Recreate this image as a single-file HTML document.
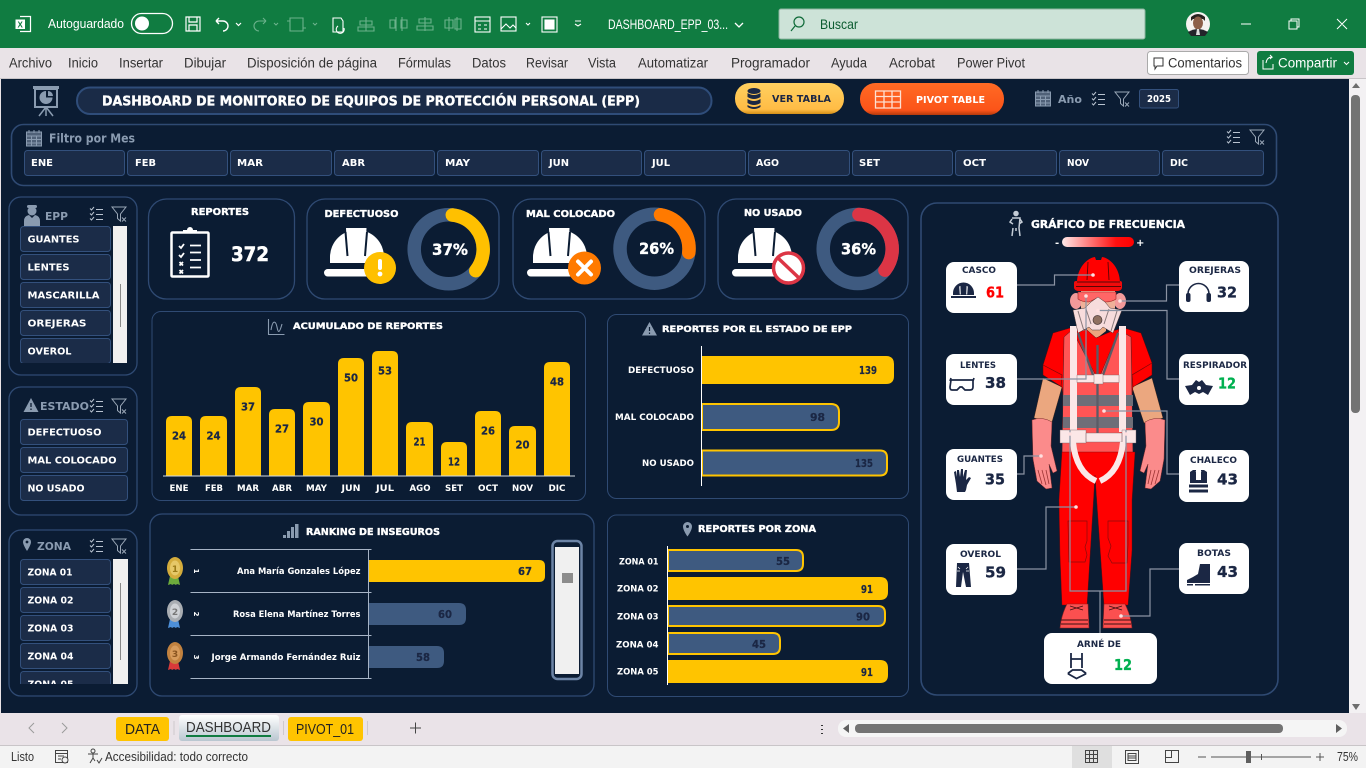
<!DOCTYPE html>
<html lang="es"><head><meta charset="utf-8"><title>Dashboard EPP</title>
<style>
html,body{margin:0;padding:0;width:1366px;height:768px;overflow:hidden;background:#0b1c33}
svg{display:block;position:absolute;left:0;top:0}
.u{font-family:"Liberation Sans",sans-serif;font-size:13.500px;fill:#333}
.m{font-family:"DejaVu Sans",sans-serif;font-weight:bold;fill:#fff;font-size:10px}
.d{fill:#1b2744}
.g{fill:#8a9bb0}
.p{fill:#0b1c33;stroke:#2f4a73;stroke-width:1.300}
.b{fill:#1b2c48;stroke:#33507c;stroke-width:1}
.w{fill:#fff}
.h{stroke:#fff;stroke-width:.35px}
.v{fill:#1b2744;stroke:#1b2744;stroke-width:.25px;font-size:10.800px}
.n{fill:#1b2744;stroke:#1b2744;stroke-width:.35px;font-size:15.500px}
.ln{fill:none;stroke:#8b93a3;stroke-width:1.200}
.dot{fill:#ffe0e0}
</style></head><body>
<svg width="1366" height="768" viewBox="0 0 1366 768" xmlns="http://www.w3.org/2000/svg">
<defs>
<g id="cl" fill="none" stroke="#b9c3d0" stroke-width="1"><path d="M1 1.500l1.500 1.500 2.500-3M1 6.500l1.500 1.500 2.500-3M1 11.500l1.500 1.500 2.500-3M7 2.500h7M7 7.500h7M7 12.500h7"/></g>
<g id="fl" fill="none" stroke="#9aa7b7" stroke-width="1"><path d="M0 0h14l-5.500 7v7l-3-2.500V7z"/><path d="M10 10.500l4 4M14 10.500l-4 4"/></g>
<g id="hat"><path class="w" d="M330 263v-6a27 27 0 0 1 54 0v6z"/><path class="w" d="M346 228h20.500l-1.500 29h-17.500z"/><path d="M345.500 232l2 24M367 232l-2 24" stroke="#0b1c33" stroke-width="2" fill="none"/><rect class="w" x="324" y="269" width="54" height="7.500" rx="3.700"/></g>
<g id="cal" fill="none" stroke="#8a9bb0"><rect x=".5" y="3" width="15" height="14" fill="#8a9bb0" fill-opacity=".55"/><path d="M.5 7h15M.5 10.500h15M.5 14h15M5.500 7v10M10.500 7v10M3 1v3M8 1v3M13 1v3" stroke-width="1"/></g>
<g id="smallhat" fill="#1b2744"><path d="M2 13v-2a10.500 10.500 0 0 1 21 0v2zM0 14h25v2H0z"/><path fill="#fff" d="M8.200 4.500l.6 8h1l-.4-8.600zM16.800 4.500l-.6 8h-1l.4-8.600z"/></g>
<linearGradient id="lg" x1="0" x2="1"><stop offset="0" stop-color="#ffe9e9"/><stop offset=".75" stop-color="#ff1010"/><stop offset="1" stop-color="#f00"/></linearGradient>
<linearGradient id="yb" x1="0" x2="0" y1="0" y2="1"><stop offset="0" stop-color="#ffd060"/><stop offset=".85" stop-color="#ffbc45"/><stop offset="1" stop-color="#d48f18"/></linearGradient>
<linearGradient id="ob" x1="0" x2="0" y1="0" y2="1"><stop offset="0" stop-color="#ff6a24"/><stop offset=".85" stop-color="#fb5419"/><stop offset="1" stop-color="#b53a0c"/></linearGradient>
<linearGradient id="tb" x1="0" x2="0" y1="0" y2="1"><stop offset="0" stop-color="#fff"/><stop offset="1" stop-color="#b9c6d0"/></linearGradient>
<clipPath id="c1"><rect x="10" y="222" width="120" height="141"/></clipPath>
<clipPath id="c2"><rect x="10" y="555" width="120" height="129"/></clipPath>
<g id="glove"><path fill="#fb8b8b" stroke="#7a2b2b" stroke-width=".5" d="M1032 420q10-4 20 2l-1 24 6 25-4 2-4-9 3 24-6 1-9-8-4-22z"/><path d="M1038 470l4 14M1042 470l4 15M1046 470l3 14" stroke="#9c3434" stroke-width=".8" fill="none"/></g>
<g id="boot"><path fill="#fb5050" stroke="#8e1f1f" stroke-width=".6" d="M1067 604h21l1 24h-29l1-7q2-9 6-17z"/><path d="M1070 606l13 4M1083 606l-13 4M1061 620h27M1061 624h27" stroke="#3b1010" stroke-width=".9" fill="none"/></g>
</defs>

<!-- chrome -->
<rect width="1366" height="768" fill="#0b1c33"/>
<rect width="1366" height="48" fill="#107c41"/>
<rect y="48" width="1366" height="31" fill="#e9e3e7"/>
<rect y="78" width="1366" height="1" fill="#c9c5c8"/>
<rect y="79" width="1" height="634" fill="#e9e3e7"/>

<!-- title bar -->
<path d="M20 16.500h10.500v15H20" fill="none" stroke="#fff" stroke-width="1.200"/><rect x="15.500" y="19.500" width="9.500" height="9.500" fill="#fff"/>
<text x="17.500" y="27.500" style="font:bold 8px 'Liberation Sans',sans-serif;fill:#107c41">X</text>
<g fill="none" stroke="#fff" stroke-width="1.200">
<rect x="131.500" y="13.500" width="41" height="20" rx="10" stroke-width="1.300"/>
<path d="M186 17h14v14h-14zM189 17v5h8v-5M189 31v-6h8v6"/>
<path d="M216 21h7a5 5 0 0 1 0 10M216 21l3-3M216 21l3 3" stroke-width="1.400"/>
<path d="M236 23l2.500 2.500 2.500-2.500"/>
</g>
<g fill="none" stroke="#6cb28c" stroke-width="1.100">
<path d="M266 21h-7a5 5 0 0 0 0 10M266 21l-3-3M266 21l-3 3"/><path d="M274 23l2 2 2-2M313 23l2 2 2-2"/>
<path d="M290 18h13v13h-13zM287 21h3M303 28h3"/>
<path d="M366 17v14M360 21h12v4h-12zM358 27h16v4h-16z"/>
<path d="M396 17v14M402 17v14M390 20h5v8h-5zM401 20h6v8h-6z"/>
<path d="M425 17v14M419 19h12v4h-12zM417 26h16v4h-16z"/>
<path d="M449 17v14M457 17v14M445 20h8v8h-8zM455 19h6v10h-6z"/>
</g>
<g fill="none" stroke="#fff" stroke-width="1.100">
<path d="M333 18h8l2 3v11h-10z"/><path d="M338 26a4 4 0 1 0 6 2"/>
<rect x="475" y="17" width="15" height="15"/><path d="M475 21h15M478 25h3M484 25h3M478 29h3M484 29h3"/>
<rect x="501" y="17" width="15" height="14"/><path d="M501 29l5-5 4 4 3-3 3 3"/><path d="M526 23l2 2 2-2" />
<rect x="542" y="17" width="15" height="15"/><rect x="545" y="20" width="9" height="9" fill="#fff"/>
<path d="M575 24l3 2 3-2M575 21h6"/><path d="M735 23l4 4 4-4" stroke-width="1.300"/>
</g>
<circle cx="142" cy="23.500" r="7" fill="#fff"/>
<text class="u" x="48" y="28" style="fill:#fff;font-size:12.500px" textLength="76" lengthAdjust="spacingAndGlyphs">Autoguardado</text>
<text class="u" x="608" y="29" style="fill:#fff;font-size:14px" textLength="120" lengthAdjust="spacingAndGlyphs">DASHBOARD_EPP_03...</text>
<rect x="779" y="9" width="366" height="30" rx="2" fill="#cde3d8" stroke="#8db59f"/>
<circle cx="799" cy="22" r="5" fill="none" stroke="#0e6a38" stroke-width="1.200"/><path d="M795 26l-4 5" stroke="#0e6a38" stroke-width="1.200"/>
<text class="u" x="820" y="29" style="fill:#0c5c31;font-size:14px" textLength="38" lengthAdjust="spacingAndGlyphs">Buscar</text>
<circle cx="1198" cy="24" r="12" fill="#f5f3f0"/>
<path d="M1191 17q7-6 14 0v4l-2-2h-10l-2 2z" fill="#2a221f"/><ellipse cx="1198" cy="23" rx="5" ry="6.500" fill="#8c5f48"/><path d="M1188 32q10-6 20 0l-3 4h-14z" fill="#23242a"/><path d="M1197 29h2l1 6h-4z" fill="#ddd"/>
<path d="M1241 24h10M1289 21h8v8h-8zM1291 21v-2h8v8h-2M1337 19l10 10M1347 19l-10 10" stroke="#fff" stroke-width="1" fill="none"/>

<!-- ribbon tabs -->
<text class="u" x="9" y="67.500" textLength="43" lengthAdjust="spacingAndGlyphs">Archivo</text>
<text class="u" x="68" y="67.500" textLength="30" lengthAdjust="spacingAndGlyphs">Inicio</text>
<text class="u" x="119" y="67.500" textLength="44" lengthAdjust="spacingAndGlyphs">Insertar</text>
<text class="u" x="184" y="67.500" textLength="42" lengthAdjust="spacingAndGlyphs">Dibujar</text>
<text class="u" x="247" y="67.500" textLength="130" lengthAdjust="spacingAndGlyphs">Disposición de página</text>
<text class="u" x="398" y="67.500" textLength="53" lengthAdjust="spacingAndGlyphs">Fórmulas</text>
<text class="u" x="472" y="67.500" textLength="34" lengthAdjust="spacingAndGlyphs">Datos</text>
<text class="u" x="526" y="67.500" textLength="42" lengthAdjust="spacingAndGlyphs">Revisar</text>
<text class="u" x="588" y="67.500" textLength="28" lengthAdjust="spacingAndGlyphs">Vista</text>
<text class="u" x="638" y="67.500" textLength="70" lengthAdjust="spacingAndGlyphs">Automatizar</text>
<text class="u" x="731" y="67.500" textLength="79" lengthAdjust="spacingAndGlyphs">Programador</text>
<text class="u" x="831" y="67.500" textLength="36" lengthAdjust="spacingAndGlyphs">Ayuda</text>
<text class="u" x="889" y="67.500" textLength="46" lengthAdjust="spacingAndGlyphs">Acrobat</text>
<text class="u" x="957" y="67.500" textLength="68" lengthAdjust="spacingAndGlyphs">Power Pivot</text>
<rect x="1147.500" y="51.500" width="101" height="23" rx="3" fill="#fff" stroke="#aaa"/>
<path d="M1154 58h9v8h-6l-2 3v-3h-1z" fill="none" stroke="#333"/>
<text class="u" x="1168" y="67.500" textLength="74" lengthAdjust="spacingAndGlyphs">Comentarios</text>
<rect x="1257" y="51" width="97" height="24" rx="3" fill="#107c41"/>
<path d="M1263 60v9h10v-5M1266 63q1-6 6-6l-2-2M1272 57l-2 2" fill="none" stroke="#fff"/>
<text class="u" x="1278" y="67.500" style="fill:#fff" textLength="59" lengthAdjust="spacingAndGlyphs">Compartir</text>
<path d="M1344 62l2.500 2.500 2.500-2.500" fill="none" stroke="#fff"/>

<!-- header row -->
<g fill="#8a9bb0"><rect x="33" y="86" width="26" height="3"/><rect x="35" y="89" width="22" height="18" fill="none" stroke="#8a9bb0" stroke-width="2"/><path d="M46 91a6.500 6.500 0 1 0 6.500 6.500H46z"/><path d="M48 91a5 5 0 0 1 5 5h-5z"/><path d="M46 107l-7 9M46 107l7 9M46 107v9" stroke="#8a9bb0" stroke-width="1.500"/></g>
<rect x="77" y="87.500" width="634.500" height="26.500" rx="13" fill="#1a2b47" stroke="#2f4d7a" stroke-width="2"/>
<text class="m h" x="102" y="105.500" style="font-size:13px" textLength="538" lengthAdjust="spacingAndGlyphs">DASHBOARD DE MONITOREO DE EQUIPOS DE PROTECCIÓN PERSONAL (EPP)</text>
<rect x="735" y="83" width="109" height="31" rx="15" fill="url(#yb)"/>
<g fill="#1b2744"><ellipse cx="754" cy="91" rx="6.500" ry="3"/><path d="M747.500 93q6.500 4 13 0v4q-6.500 4-13 0zM747.500 99q6.500 4 13 0v4q-6.500 4-13 0zM747.500 105q6.500 4 13 0v2q-6.500 4-13 0z"/></g>
<text class="m" x="772" y="102" style="fill:#1b2744;font-size:10px" textLength="59" lengthAdjust="spacingAndGlyphs">VER TABLA</text>
<rect x="860" y="83" width="144" height="32" rx="15.500" fill="url(#ob)"/>
<path d="M875.500 91h25v17h-25zM875.500 96.500h25M875.500 102h25M884 91v17M892 91v17" fill="none" stroke="#fde0d2" stroke-width="1.300"/>
<text class="m" x="916" y="103" style="font-size:10px" textLength="69" lengthAdjust="spacingAndGlyphs">PIVOT TABLE</text>
<use href="#cal" x="1035" y="89"/>
<text class="m" x="1058" y="103" style="font-size:11px;fill:#8a9bb0" textLength="24" lengthAdjust="spacingAndGlyphs">Año</text>
<use href="#cl" x="1091" y="92"/><use href="#fl" x="1115" y="92"/>
<rect class="b" x="1139.500" y="89.500" width="39" height="18.500" rx="2"/>
<text class="m" x="1147" y="102" style="font-size:9.500px" textLength="24" lengthAdjust="spacingAndGlyphs">2025</text>

<!-- month filter -->
<rect x="11.500" y="124.500" width="1265" height="61" rx="12" fill="#0b1c33" stroke="#2f4a73" stroke-width="1.600"/>
<use href="#cal" x="26" y="129"/>
<text class="m" x="49" y="142.500" style="font-size:12px;fill:#8a9bb0" textLength="86" lengthAdjust="spacingAndGlyphs">Filtro por Mes</text>
<use href="#cl" x="1226" y="130"/><use href="#fl" x="1250" y="130"/>
<rect class="b" x="24.500" y="150.500" width="100" height="25" rx="3"/><rect class="b" x="127.500" y="150.500" width="100" height="25" rx="3"/><rect class="b" x="230.500" y="150.500" width="101" height="25" rx="3"/><rect class="b" x="334.500" y="150.500" width="100" height="25" rx="3"/><rect class="b" x="437.500" y="150.500" width="101" height="25" rx="3"/><rect class="b" x="541.500" y="150.500" width="100" height="25" rx="3"/><rect class="b" x="644.500" y="150.500" width="101" height="25" rx="3"/><rect class="b" x="748.500" y="150.500" width="101" height="25" rx="3"/><rect class="b" x="852.500" y="150.500" width="100" height="25" rx="3"/><rect class="b" x="955.500" y="150.500" width="101" height="25" rx="3"/><rect class="b" x="1059.500" y="150.500" width="100" height="25" rx="3"/><rect class="b" x="1162.500" y="150.500" width="101" height="25" rx="3"/>
<text class="m" x="31" y="166" textLength="22" lengthAdjust="spacingAndGlyphs">ENE</text><text class="m" x="135" y="166" textLength="21" lengthAdjust="spacingAndGlyphs">FEB</text><text class="m" x="237" y="166" textLength="26" lengthAdjust="spacingAndGlyphs">MAR</text><text class="m" x="342" y="166" textLength="23" lengthAdjust="spacingAndGlyphs">ABR</text><text class="m" x="445" y="166" textLength="25" lengthAdjust="spacingAndGlyphs">MAY</text><text class="m" x="549" y="166" textLength="20" lengthAdjust="spacingAndGlyphs">JUN</text><text class="m" x="652" y="166" textLength="18" lengthAdjust="spacingAndGlyphs">JUL</text><text class="m" x="756" y="166" textLength="23" lengthAdjust="spacingAndGlyphs">AGO</text><text class="m" x="859" y="166" textLength="21" lengthAdjust="spacingAndGlyphs">SET</text><text class="m" x="963" y="166" textLength="23" lengthAdjust="spacingAndGlyphs">OCT</text><text class="m" x="1067" y="166" textLength="22" lengthAdjust="spacingAndGlyphs">NOV</text><text class="m" x="1170" y="166" textLength="18" lengthAdjust="spacingAndGlyphs">DIC</text>

<!-- EPP slicer -->
<rect class="p" x="9" y="197" width="128" height="178" rx="12"/>
<g fill="#8a9bb0"><circle cx="32" cy="211" r="4.500"/><rect x="27" y="205" width="10" height="3" rx="1.500"/><path d="M24 226v-5q0-5 5-6l3 3 3-3q5 1 5 6v5z"/></g>
<text class="m" x="45" y="220" style="font-size:11px;fill:#8a9bb0" textLength="23" lengthAdjust="spacingAndGlyphs">EPP</text>
<use href="#cl" x="89" y="207"/><use href="#fl" x="112" y="207"/>
<g clip-path="url(#c1)">
<rect class="b" x="20.500" y="226.500" width="90" height="25" rx="3"/><rect class="b" x="20.500" y="254.500" width="90" height="25" rx="3"/><rect class="b" x="20.500" y="282.500" width="90" height="25" rx="3"/><rect class="b" x="20.500" y="310.500" width="90" height="25" rx="3"/><rect class="b" x="20.500" y="338.500" width="90" height="25" rx="3"/>
<text class="m" x="27.500" y="242.500" textLength="52" lengthAdjust="spacingAndGlyphs">GUANTES</text><text class="m" x="27.500" y="270.500" textLength="42" lengthAdjust="spacingAndGlyphs">LENTES</text><text class="m" x="27.500" y="298.500" textLength="72" lengthAdjust="spacingAndGlyphs">MASCARILLA</text><text class="m" x="27.500" y="326.500" textLength="59" lengthAdjust="spacingAndGlyphs">OREJERAS</text><text class="m" x="27.500" y="354.500" textLength="44" lengthAdjust="spacingAndGlyphs">OVEROL</text>
</g>
<rect x="113" y="226" width="14" height="137" fill="#f0f0f0"/><rect x="120" y="284" width="1" height="43" fill="#8a8a8a"/>

<!-- Estado slicer -->
<rect class="p" x="9" y="387" width="128" height="128" rx="12"/>
<path fill="#8a9bb0" d="M31 398l7.500 14h-15z"/><path d="M31 403v4M31 408.500v1.500" stroke="#0b1c33" stroke-width="1.300"/>
<text class="m" x="40" y="410" style="font-size:11px;fill:#8a9bb0" textLength="49" lengthAdjust="spacingAndGlyphs">ESTADO</text>
<use href="#cl" x="89" y="399"/><use href="#fl" x="112" y="399"/>
<rect class="b" x="20.500" y="419.500" width="107" height="25" rx="3"/><rect class="b" x="20.500" y="447.500" width="107" height="25" rx="3"/><rect class="b" x="20.500" y="475.500" width="107" height="25" rx="3"/>
<text class="m" x="27.500" y="435.500" textLength="74" lengthAdjust="spacingAndGlyphs">DEFECTUOSO</text><text class="m" x="27.500" y="463.500" textLength="89" lengthAdjust="spacingAndGlyphs">MAL COLOCADO</text><text class="m" x="27.500" y="491.500" textLength="57" lengthAdjust="spacingAndGlyphs">NO USADO</text>

<!-- Zona slicer -->
<rect class="p" x="9" y="530" width="128" height="166" rx="12"/>
<path fill="#8a9bb0" d="M27 538a4 4 0 0 1 4 4c0 3-4 9-4 9s-4-6-4-9a4 4 0 0 1 4-4z"/><circle cx="27" cy="542" r="1.400" fill="#0b1c33"/>
<text class="m" x="37" y="550" style="font-size:11px;fill:#8a9bb0" textLength="34" lengthAdjust="spacingAndGlyphs">ZONA</text>
<use href="#cl" x="89" y="539"/><use href="#fl" x="112" y="539"/>
<g clip-path="url(#c2)">
<rect class="b" x="20.500" y="559.500" width="90" height="25" rx="3"/><rect class="b" x="20.500" y="587.500" width="90" height="25" rx="3"/><rect class="b" x="20.500" y="615.500" width="90" height="25" rx="3"/><rect class="b" x="20.500" y="643.500" width="90" height="25" rx="3"/><rect class="b" x="20.500" y="671.500" width="90" height="25" rx="3"/>
<text class="m" x="27.500" y="575.500" textLength="45" lengthAdjust="spacingAndGlyphs">ZONA 01</text><text class="m" x="27.500" y="603.500" textLength="46" lengthAdjust="spacingAndGlyphs">ZONA 02</text><text class="m" x="27.500" y="631.500" textLength="46" lengthAdjust="spacingAndGlyphs">ZONA 03</text><text class="m" x="27.500" y="659.500" textLength="46" lengthAdjust="spacingAndGlyphs">ZONA 04</text><text class="m" x="27.500" y="687.500" textLength="46" lengthAdjust="spacingAndGlyphs">ZONA 05</text>
</g>
<rect x="113" y="559" width="15" height="125" fill="#f0f0f0"/><rect x="120" y="583" width="1" height="77" fill="#8a8a8a"/>

<!-- KPI cards -->
<rect class="p" x="148.500" y="199" width="146" height="100" rx="18"/>
<rect class="p" x="307" y="199" width="192" height="100" rx="18"/>
<rect class="p" x="513" y="199" width="192" height="100" rx="18"/>
<rect class="p" x="718" y="199" width="190" height="100" rx="18"/>
<text class="m h" x="191" y="215" textLength="58" lengthAdjust="spacingAndGlyphs">REPORTES</text>
<rect x="171.500" y="232.500" width="37" height="44" rx="1" fill="none" stroke="#fff" stroke-width="2.500"/>
<path class="w" d="M183 233v-3h4a3 3 0 0 1 6 0h4v3z"/>
<path d="M179 246l2 2 3-4M179 255l2 2 3-4M179.500 262l3.500 3.500M183 262l-3.500 3.500M179.500 270l3.500 3.500M183 270l-3.500 3.500M190 245.500h11M190 252.500h11M190 260h11M190 267.500h11" stroke="#fff" stroke-width="1.800" fill="none"/>
<text class="m" x="231" y="261" style="font-size:19.500px;stroke:#fff;stroke-width:.5px" textLength="38" lengthAdjust="spacingAndGlyphs">372</text>

<text class="m h" x="324.500" y="217" textLength="74" lengthAdjust="spacingAndGlyphs">DEFECTUOSO</text>
<use href="#hat"/>
<circle cx="380" cy="268" r="16" fill="#ffc000"/><rect x="378" y="259" width="4" height="11" rx="2" fill="#fff"/><circle cx="380" cy="274" r="2.400" fill="#fff"/>
<circle cx="448.700" cy="249.300" r="34.500" fill="none" stroke="#3e5a80" stroke-width="13.500"/>
<circle cx="448.700" cy="249.300" r="34.500" fill="none" stroke="#ffc000" stroke-width="13.500" stroke-linecap="round" pathLength="100" stroke-dasharray="34 100" transform="rotate(-84 448.700 249.300)"/>
<text class="m h" x="432" y="255" style="font-size:16px" textLength="36" lengthAdjust="spacingAndGlyphs">37%</text>

<text class="m h" x="526" y="217" textLength="89" lengthAdjust="spacingAndGlyphs">MAL COLOCADO</text>
<use href="#hat" x="203"/>
<circle cx="584.500" cy="268" r="16.500" fill="#ff7a00"/><path d="M578 261.500l13 13M591 261.500l-13 13" stroke="#fff" stroke-width="4" stroke-linecap="round"/>
<circle cx="654.500" cy="248.700" r="34.500" fill="none" stroke="#3e5a80" stroke-width="13.500"/>
<circle cx="654.500" cy="248.700" r="34.500" fill="none" stroke="#ff7a00" stroke-width="13.500" stroke-linecap="round" pathLength="100" stroke-dasharray="24 100" transform="rotate(-80 654.500 248.700)"/>
<text class="m h" x="639" y="254" style="font-size:16px" textLength="35" lengthAdjust="spacingAndGlyphs">26%</text>

<text class="m h" x="744" y="216" textLength="58" lengthAdjust="spacingAndGlyphs">NO USADO</text>
<use href="#hat" x="408"/>
<circle cx="788.500" cy="268" r="15" fill="#fff" stroke="#dc3545" stroke-width="3.500"/><path d="M778.500 258.500l20 19" stroke="#dc3545" stroke-width="3.500"/>
<circle cx="857.700" cy="249" r="34.500" fill="none" stroke="#3e5a80" stroke-width="13.500"/>
<circle cx="857.700" cy="249" r="34.500" fill="none" stroke="#dc3545" stroke-width="13.500" stroke-linecap="round" pathLength="100" stroke-dasharray="35 100" transform="rotate(-88 857.700 249)"/>
<text class="m h" x="841" y="254.500" style="font-size:16px" textLength="35" lengthAdjust="spacingAndGlyphs">36%</text>

<!-- Acumulado -->
<rect class="p" x="152" y="311.500" width="433.500" height="189" rx="9" style="stroke-width:1"/>
<path d="M268.500 319v15.500h16M271 330c2-12 5-8 6-3s2 8 5-3" fill="none" stroke="#8a9bb0" stroke-width="1.100"/>
<text class="m h" x="293" y="329" style="font-size:9px" textLength="150" lengthAdjust="spacingAndGlyphs">ACUMULADO DE REPORTES</text>
<g fill="#ffc400">
<path d="M166 476v-54q0-6 6-6h14q6 0 6 6v54z"/><path d="M200 476v-54q0-6 6-6h15q6 0 6 6v54z"/><path d="M235 476v-83q0-6 6-6h14q6 0 6 6v83z"/><path d="M269 476v-61q0-6 6-6h14q6 0 6 6v61z"/><path d="M303 476v-68q0-6 6-6h15q6 0 6 6v68z"/><path d="M338 476v-112q0-6 6-6h14q6 0 6 6v112z"/><path d="M372 476v-119q0-6 6-6h14q6 0 6 6v119z"/><path d="M406 476v-48q0-6 6-6h15q6 0 6 6v48z"/><path d="M441 476v-28q0-6 6-6h14q6 0 6 6v28z"/><path d="M475 476v-59q0-6 6-6h14q6 0 6 6v59z"/><path d="M509 476v-44q0-6 6-6h15q6 0 6 6v44z"/><path d="M544 476v-108q0-6 6-6h14q6 0 6 6v108z"/>
</g>
<rect x="163" y="475.500" width="412" height="1" fill="#d5dbe3"/>
<g text-anchor="middle">
<text class="m v" x="179" y="439.500" textLength="14" lengthAdjust="spacingAndGlyphs">24</text><text class="m v" x="213.500" y="439.500" textLength="14" lengthAdjust="spacingAndGlyphs">24</text><text class="m v" x="248" y="410.500" textLength="14" lengthAdjust="spacingAndGlyphs">37</text><text class="m v" x="282" y="432.500" textLength="14" lengthAdjust="spacingAndGlyphs">27</text><text class="m v" x="316.500" y="425.500" textLength="14" lengthAdjust="spacingAndGlyphs">30</text><text class="m v" x="351" y="381.500" textLength="14" lengthAdjust="spacingAndGlyphs">50</text><text class="m v" x="385" y="374.500" textLength="14" lengthAdjust="spacingAndGlyphs">53</text><text class="m v" x="419.500" y="445.500" textLength="12" lengthAdjust="spacingAndGlyphs">21</text><text class="m v" x="454" y="465.500" textLength="12" lengthAdjust="spacingAndGlyphs">12</text><text class="m v" x="488" y="434.500" textLength="14" lengthAdjust="spacingAndGlyphs">26</text><text class="m v" x="522.500" y="448.500" textLength="14" lengthAdjust="spacingAndGlyphs">20</text><text class="m v" x="557" y="385.500" textLength="14" lengthAdjust="spacingAndGlyphs">48</text>
</g>
<g text-anchor="middle">
<text class="m" x="179" y="491" style="font-size:9px" textLength="19" lengthAdjust="spacingAndGlyphs">ENE</text><text class="m" x="214" y="491" style="font-size:9px" textLength="18" lengthAdjust="spacingAndGlyphs">FEB</text><text class="m" x="248" y="491" style="font-size:9px" textLength="22" lengthAdjust="spacingAndGlyphs">MAR</text><text class="m" x="282" y="491" style="font-size:9px" textLength="20" lengthAdjust="spacingAndGlyphs">ABR</text><text class="m" x="316.500" y="491" style="font-size:9px" textLength="21" lengthAdjust="spacingAndGlyphs">MAY</text><text class="m" x="351" y="491" style="font-size:9px" textLength="19" lengthAdjust="spacingAndGlyphs">JUN</text><text class="m" x="385" y="491" style="font-size:9px" textLength="18" lengthAdjust="spacingAndGlyphs">JUL</text><text class="m" x="420" y="491" style="font-size:9px" textLength="21" lengthAdjust="spacingAndGlyphs">AGO</text><text class="m" x="454" y="491" style="font-size:9px" textLength="18" lengthAdjust="spacingAndGlyphs">SET</text><text class="m" x="488" y="491" style="font-size:9px" textLength="20" lengthAdjust="spacingAndGlyphs">OCT</text><text class="m" x="522.500" y="491" style="font-size:9px" textLength="21" lengthAdjust="spacingAndGlyphs">NOV</text><text class="m" x="557" y="491" style="font-size:9px" textLength="17" lengthAdjust="spacingAndGlyphs">DIC</text>
</g>

<!-- Estado EPP -->
<rect class="p" x="607.500" y="314.500" width="301" height="184" rx="9" style="stroke-width:1"/>
<path fill="#8a9bb0" d="M649.500 322l7.500 13.500h-15z"/><path d="M649.500 327v4M649.500 332.500v1.500" stroke="#0b1c33" stroke-width="1.200"/>
<text class="m h" x="662" y="332" style="font-size:9px" textLength="190" lengthAdjust="spacingAndGlyphs">REPORTES POR EL ESTADO DE EPP</text>
<path d="M702 356h184q8 0 8 8v12q0 8-8 8H702z" fill="#ffc400"/>
<path d="M702 404h129q8 0 8 8v10q0 8-8 8H702z" fill="#3e5a80" stroke="#ffc400" stroke-width="2"/>
<path d="M702 450.500h178q7 0 7 7v11q0 7-7 7H702z" fill="#3e5a80" stroke="#ffc400" stroke-width="2"/>
<rect x="701" y="346" width="1" height="140" fill="#fff"/>
<text class="m" x="628" y="373" style="font-size:8.500px" textLength="66" lengthAdjust="spacingAndGlyphs">DEFECTUOSO</text>
<text class="m" x="615" y="420" style="font-size:8.500px" textLength="79" lengthAdjust="spacingAndGlyphs">MAL COLOCADO</text>
<text class="m" x="642" y="466" style="font-size:8.500px" textLength="52" lengthAdjust="spacingAndGlyphs">NO USADO</text>
<text class="m v" x="859" y="374" textLength="18" lengthAdjust="spacingAndGlyphs">139</text>
<text class="m v" x="810" y="421" textLength="15" lengthAdjust="spacingAndGlyphs">98</text>
<text class="m v" x="855" y="467" textLength="18" lengthAdjust="spacingAndGlyphs">135</text>

<!-- Ranking -->
<rect class="p" x="150" y="514" width="444" height="182" rx="12"/>
<path fill="#8a9bb0" d="M283 535h3v3h-3zM287 531h3v7h-3zM291 527h3v11h-3zM295 524h3.500v14H295z"/>
<text class="m h" x="306" y="535" style="font-size:9.500px" textLength="134" lengthAdjust="spacingAndGlyphs">RANKING DE INSEGUROS</text>
<path d="M369 560h170q6 0 6 6v10q0 6-6 6H369z" fill="#ffc400"/>
<path d="M369 603h90q7 0 7 7v8q0 7-7 7h-90z" fill="#3e5a80"/>
<path d="M369 646h68q7 0 7 7v8q0 7-7 7h-68z" fill="#3e5a80"/>
<path d="M190.500 549.500h181M190.500 592.500h181M190.500 635.500h181M190.500 678.500h181M368.500 549v130" stroke="#a7b4c6" stroke-width="1" fill="none"/>
<text class="m v" x="518" y="575" textLength="14" lengthAdjust="spacingAndGlyphs">67</text>
<text class="m v" x="438" y="618" textLength="14" lengthAdjust="spacingAndGlyphs">60</text>
<text class="m v" x="416" y="661" textLength="14" lengthAdjust="spacingAndGlyphs">58</text>
<text class="m" x="237" y="574" style="font-size:8.500px" textLength="123.500" lengthAdjust="spacingAndGlyphs">Ana María Gonzales López</text>
<text class="m" x="233" y="617" style="font-size:8.500px" textLength="127.500" lengthAdjust="spacingAndGlyphs">Rosa Elena Martínez Torres</text>
<text class="m" x="211.500" y="660" style="font-size:8.500px" textLength="149" lengthAdjust="spacingAndGlyphs">Jorge Armando Fernández Ruiz</text>
<text class="m" transform="translate(194 571) rotate(90)" text-anchor="middle" style="font-size:7px">1</text>
<text class="m" transform="translate(194 614) rotate(90)" text-anchor="middle" style="font-size:7px">2</text>
<text class="m" transform="translate(194 657) rotate(90)" text-anchor="middle" style="font-size:7px">3</text>
<path fill="#6dab3c" d="M170 576l-2 9 3-1 1 1 2-1 2 1 1-1 3 1-2-9z"/><ellipse cx="175" cy="568" rx="8" ry="11" fill="#d4ac3c"/><ellipse cx="175" cy="568" rx="5" ry="7.500" fill="#e6c868"/><text class="m" x="175" y="572" text-anchor="middle" style="font-size:9px;fill:#9a7a18">1</text>
<path fill="#4d8fd8" d="M170 619l-2 9 3-1 1 1 2-1 2 1 1-1 3 1-2-9z"/><ellipse cx="175" cy="611" rx="8" ry="11" fill="#a9adb2"/><ellipse cx="175" cy="611" rx="5" ry="7.500" fill="#cfd2d6"/><text class="m" x="175" y="615" text-anchor="middle" style="font-size:9px;fill:#777">2</text>
<path fill="#d83a3a" d="M170 661l-2 9 3-1 1 1 2-1 2 1 1-1 3 1-2-9z"/><ellipse cx="175" cy="653" rx="8" ry="11" fill="#c2823f"/><ellipse cx="175" cy="653" rx="5" ry="7.500" fill="#d89c5c"/><text class="m" x="175" y="657" text-anchor="middle" style="font-size:9px;fill:#8a5520">3</text>
<rect x="552.500" y="541" width="29" height="138" rx="5" fill="#0b1c33" stroke="#6c84a6" stroke-width="2.500"/>
<rect x="555" y="547" width="24" height="127" fill="#f0f0f0"/><rect x="562" y="573" width="11" height="10" fill="#8c8c8c"/>

<!-- Zona chart -->
<rect class="p" x="607.500" y="515" width="301" height="181.500" rx="9" style="stroke-width:1"/>
<path fill="#8a9bb0" d="M687.500 522a4.500 4.500 0 0 1 4.500 4.500c0 4-4.500 10-4.500 10s-4.500-6-4.500-10a4.500 4.500 0 0 1 4.500-4.500z"/><circle cx="687.500" cy="526.500" r="1.500" fill="#0b1c33"/>
<text class="m h" x="698" y="532" style="font-size:9.500px" textLength="118" lengthAdjust="spacingAndGlyphs">REPORTES POR ZONA</text>
<path d="M668 550h128q7 0 7 7v7q0 7-7 7H668z" fill="#3e5a80" stroke="#ffc400" stroke-width="2"/>
<path d="M668 577h212q8 0 8 8v7q0 8-8 8H668z" fill="#ffc400"/>
<path d="M668 606h210q7 0 7 7v6q0 7-7 7H668z" fill="#3e5a80" stroke="#ffc400" stroke-width="2"/>
<path d="M668 633h105q7 0 7 7v7q0 7-7 7H668z" fill="#3e5a80" stroke="#ffc400" stroke-width="2"/>
<path d="M668 660h212q8 0 8 8v7q0 8-8 8H668z" fill="#ffc400"/>
<rect x="667" y="546" width="1" height="139" fill="#fff"/>
<text class="m" x="619" y="564.500" style="font-size:8.500px" textLength="39.500" lengthAdjust="spacingAndGlyphs">ZONA 01</text>
<text class="m" x="617" y="591.500" style="font-size:8.500px" textLength="41.500" lengthAdjust="spacingAndGlyphs">ZONA 02</text>
<text class="m" x="617" y="619.500" style="font-size:8.500px" textLength="41.500" lengthAdjust="spacingAndGlyphs">ZONA 03</text>
<text class="m" x="616" y="647.500" style="font-size:8.500px" textLength="42.500" lengthAdjust="spacingAndGlyphs">ZONA 04</text>
<text class="m" x="617" y="674.500" style="font-size:8.500px" textLength="41.500" lengthAdjust="spacingAndGlyphs">ZONA 05</text>
<text class="m v" x="776" y="565" textLength="14" lengthAdjust="spacingAndGlyphs">55</text>
<text class="m v" x="861" y="593" textLength="12" lengthAdjust="spacingAndGlyphs">91</text>
<text class="m v" x="856" y="620.500" textLength="14" lengthAdjust="spacingAndGlyphs">90</text>
<text class="m v" x="752" y="648" textLength="14" lengthAdjust="spacingAndGlyphs">45</text>
<text class="m v" x="861" y="676" textLength="12" lengthAdjust="spacingAndGlyphs">91</text>

<!-- Frequency panel -->
<rect class="p" x="921" y="203" width="357" height="492" rx="16" style="stroke-width:1.600"/>
<g fill="none" stroke="#c4ccd6" stroke-width="1.500"><circle cx="1016" cy="213.500" r="2" fill="#c4ccd6"/><path d="M1012 219l-2 3 3 2M1020 219l2 3-3 2M1012 218h8l-1 10 1 8M1013 228l-1 8M1016 228v3"/></g>
<text class="m h" x="1031" y="228" style="font-size:11px" textLength="154" lengthAdjust="spacingAndGlyphs">GRÁFICO DE FRECUENCIA</text>
<text class="m" x="1055" y="246" style="font-size:10px">-</text>
<rect x="1062" y="237" width="72" height="10" rx="5" fill="url(#lg)"/>
<text class="m" x="1136" y="246" style="font-size:10px">+</text>

<!-- figure -->
<path fill="#eba77f" stroke="#3b1f14" stroke-width=".4" d="M1043 378l19 9-10 35-18-4zM1132 387l20-9 11 40-19 5z"/>
<path fill="#eba77f" d="M1087 322h19v9l-9.500 7.500-9.500-7.500z"/>
<!-- shirt -->
<path fill="#f00" stroke="#5a0808" stroke-width=".5" d="M1070 328l-17 5-10 32v10l19 12 1 8h69l1-8 19-12v-12l-11-30-17-5-12 3-16 7-9-8z"/>
<path d="M1043 365l19 10-1 12M1152 363l-20 12 1 12" fill="none" stroke="#7a0808" stroke-width=".7"/>
<!-- vest -->
<path fill="#ff5555" stroke="#40272c" stroke-width=".5" d="M1064 337l8-7 24 46h4l19-46 12 7 2 118h-71z"/>
<path fill="#f00" d="M1086 336l10 8.500 9-7 5-1-11 39h-3z"/>
<path fill="#6f6e78" d="M1063 395h70v11h-70zM1063 417h70v11h-70z"/>
<path d="M1097.500 345v90M1078 333l15 42M1118 333l-15 42" fill="none" stroke="#5b5b66" stroke-width="2.300"/>
<!-- pants -->
<path fill="#f00" stroke="#6e0707" stroke-width=".4" d="M1062 452h73l-3 48 0 50-4 55h-24l-9-130-8 130h-25l-2-50-1-55z"/>
<path d="M1068 521h19v20l-2 6 2 8-2 7h-16zM1108 521h20v24l-1 18h-15l-4-7 3-10-3-8z" fill="none" stroke="#8b0c0c" stroke-width=".7"/>
<!-- harness -->
<path d="M1070 326h7v106h-7zM1119 326h7v106h-7z" fill="#fbe7e7"/>
<rect x="1077" y="375" width="42" height="7.500" fill="#fbe7e7" stroke="#7a6064" stroke-width=".4"/><rect x="1094" y="374" width="9" height="10" fill="#fbe7e7" stroke="#7a6064" stroke-width=".4"/>
<path d="M1060 430h26v13h-26zM1086 433h36v9h-36zM1122 430h14v13h-14z" fill="#fbe7e7" stroke="#7a6064" stroke-width=".4"/>
<path d="M1073 442Q1076 472 1096 481M1123 442Q1120 472 1100 481" fill="none" stroke="#fbe7e7" stroke-width="6"/>
<use href="#boot"/><use href="#boot" transform="translate(2192 0) scale(-1 1)"/>
<use href="#glove"/><use href="#glove" transform="translate(2197 0) scale(-1 1)"/>
<!-- head -->
<ellipse cx="1076" cy="301" rx="6" ry="8" fill="#f39a9a"/><ellipse cx="1120" cy="301" rx="6" ry="8" fill="#f39a9a"/>
<path fill="#efb199" d="M1081 288h34v24h-34z"/>
<path fill="#f66" stroke="#a02424" stroke-width=".6" d="M1078 292h38v7q-4 3-11 3l-8-4-8 4q-7 0-11-3z"/>
<path fill="#f7dcdc" stroke="#4a3a3a" stroke-width=".5" d="M1073 310l12-2 6-6 7-5 7 5 5 6 12 2-9 23-10-6-3 3h-8l-3-3-11 6z"/>
<path d="M1078 311l6 20M1117 311l-6 20M1086 309l5 15M1109 309l-5 15" stroke="#88797a" stroke-width="1" fill="none"/>
<circle cx="1097.500" cy="320" r="4.500" fill="#8f7060" stroke="#4a3a3a" stroke-width=".7"/>
<path fill="#f00" d="M1077 283c0-15 10-25 18-26l1 3h5l1-3c8 1 18 11 18 26z"/>
<path fill="#ef0b0b" d="M1077 281h43q2 0 2 2v5q-1 3-5 3h-38q-4 0-5-3v-5q0-2 2-2z"/>
<path d="M1077 282h43M1076 286.500h45M1088 262l-1 18M1108 262l1 18" stroke="#5b0505" stroke-width=".9" fill="none"/>

<!-- connectors -->
<path class="ln" d="M1017 285h37.500v-10H1093M1179 285h-12.500v16H1120M1179 379h-12v-68.500h-69M1017 379h69v-83M1179 474h-12v-63h-63M1017 474h7v-18h17M1017 569h29v-62h30M1179 569h-29v47h-29M1100 633v-42M1070 430v161h56V430"/>
<g class="dot"><circle cx="1093" cy="275" r="1.800"/><circle cx="1120" cy="301" r="1.800"/><circle cx="1098" cy="310.500" r="1.800"/><circle cx="1086" cy="296" r="1.800"/><circle cx="1104" cy="411" r="1.800"/><circle cx="1041" cy="456" r="1.800"/><circle cx="1076" cy="507" r="1.800"/><circle cx="1121" cy="616" r="1.800"/><circle cx="1070" cy="434" r="1.800"/><circle cx="1126" cy="434" r="1.800"/></g>

<!-- cards -->
<g fill="#fff"><rect x="946" y="262" width="71" height="51" rx="8"/><rect x="1179" y="261" width="70" height="51" rx="8"/><rect x="946" y="354" width="71" height="51" rx="8"/><rect x="1179" y="354" width="70" height="51" rx="8"/><rect x="946" y="449" width="71" height="51" rx="8"/><rect x="1179" y="450" width="70" height="52" rx="8"/><rect x="946" y="544" width="71" height="51" rx="8"/><rect x="1179" y="543" width="70" height="51" rx="8"/><rect x="1044" y="633" width="113" height="51" rx="8"/></g>
<text class="m d" x="962" y="273" style="font-size:8.500px" textLength="34" lengthAdjust="spacingAndGlyphs">CASCO</text>
<use href="#smallhat" x="951" y="282"/>
<text class="m n" x="986" y="297.500" style="fill:#f00;stroke:#f00" textLength="18" lengthAdjust="spacingAndGlyphs">61</text>
<text class="m d" x="1189" y="273" style="font-size:8.500px" textLength="52" lengthAdjust="spacingAndGlyphs">OREJERAS</text>
<path d="M1188 299v-5a10.500 10.500 0 0 1 21 0v5" fill="none" stroke="#1b2744" stroke-width="1.600"/><rect x="1186" y="293" width="4.500" height="9" rx="2" fill="#1b2744"/><rect x="1206.500" y="293" width="4.500" height="9" rx="2" fill="#1b2744"/>
<text class="m n" x="1217" y="297.500" textLength="20" lengthAdjust="spacingAndGlyphs">32</text>
<text class="m d" x="960" y="368" style="font-size:8.500px" textLength="36" lengthAdjust="spacingAndGlyphs">LENTES</text>
<path d="M951 380h22v7q0 3-3 3h-5l-3-3h-2l-3 3h-5q-2 0-2-3zM950 381l1-3M973 381l1-3" fill="none" stroke="#1b2744" stroke-width="1.700"/>
<text class="m n" x="985" y="388" textLength="21" lengthAdjust="spacingAndGlyphs">38</text>
<text class="m d" x="1183" y="368" style="font-size:8.500px" textLength="64" lengthAdjust="spacingAndGlyphs">RESPIRADOR</text>
<path fill="#1b2744" d="M1185 386l7-1 4-5 3 2 3-2 4 5 7 1-5 9-5-3-4 2-4-2-5 3z"/><circle cx="1199" cy="388" r="2" fill="#fff"/>
<text class="m n" x="1218" y="388.500" style="fill:#00b050;stroke:#00b050" textLength="18" lengthAdjust="spacingAndGlyphs">12</text>
<text class="m d" x="957" y="462" style="font-size:8.500px" textLength="46" lengthAdjust="spacingAndGlyphs">GUANTES</text>
<path fill="#1b2744" d="M954 472l2-1 1 6 0-7h2l1 7 1-8h2l0 8 2-7h2l-1 10 3-3 2 1-4 7-1 5-1 2h-8l-1-8z"/>
<text class="m n" x="985" y="484.500" textLength="20" lengthAdjust="spacingAndGlyphs">35</text>
<text class="m d" x="1190" y="463" style="font-size:8.500px" textLength="47" lengthAdjust="spacingAndGlyphs">CHALECO</text>
<path fill="#1b2744" d="M1190 472l3-2h3v10h5v-10h3l3 2v11h-17z"/><path d="M1196 471l2.500 8 2.500-8" fill="none" stroke="#fff" stroke-width=".8"/><path fill="#1b2744" d="M1189 484.500h19v3h-19zM1189 489.500h19v3h-19z"/>
<text class="m n" x="1217" y="484.500" textLength="21" lengthAdjust="spacingAndGlyphs">43</text>
<text class="m d" x="960" y="557" style="font-size:8.500px" textLength="41" lengthAdjust="spacingAndGlyphs">OVEROL</text>
<path fill="#1b2744" d="M957 563h12l2 24h-5l-3-15-2 15h-5z"/><path d="M958 567l2 2M968 567l-2 2M957 571h3M966 571h3" stroke="#fff" stroke-width=".7"/>
<text class="m n" x="985" y="577.500" textLength="21" lengthAdjust="spacingAndGlyphs">59</text>
<text class="m d" x="1197" y="556" style="font-size:8.500px" textLength="34" lengthAdjust="spacingAndGlyphs">BOTAS</text>
<path fill="#1b2744" d="M1200 564h10v19h-23v-3l6-3 5-3zM1187 584h6v1.500h-6zM1195 584h15v1.500h-15z"/>
<text class="m n" x="1217" y="577" textLength="21" lengthAdjust="spacingAndGlyphs">43</text>
<text class="m d" x="1077" y="647" style="font-size:8.500px" textLength="44" lengthAdjust="spacingAndGlyphs">ARNÉ DE</text>
<path d="M1071 653v15M1082 653v15M1071 659h11M1068.500 673l4-3h9l4 3v1l-8 4-1 .5-8-4.500z" fill="none" stroke="#1b2744" stroke-width="1.800"/>
<text class="m n" x="1114" y="670" style="fill:#00b050;stroke:#00b050" textLength="18" lengthAdjust="spacingAndGlyphs">12</text>

<!-- vertical scrollbar -->
<rect x="1349" y="79" width="17" height="634" fill="#f3f1f3"/>
<rect x="1351" y="95" width="9" height="318" rx="4" fill="#737373"/>
<path d="M1352 88l4-5 4 5zM1352 704l4 6 4-6z" fill="#6e6e6e"/>

<!-- sheet tab bar -->
<rect y="713" width="1366" height="32" fill="#eae3e8"/>
<path d="M34 723l-5 5 5 5M62 723l5 5-5 5" fill="none" stroke="#9b9b9b"/>
<rect x="116" y="717" width="53" height="24" rx="3" fill="#ffc400"/>
<rect x="179" y="715" width="100" height="26" rx="3" fill="url(#tb)"/>
<rect x="186" y="735" width="85" height="2" fill="#107c41"/>
<rect x="288" y="717" width="75" height="24" rx="3" fill="#ffc400"/>
<text class="u" x="125" y="734" style="font-size:14.500px;fill:#222" textLength="35" lengthAdjust="spacingAndGlyphs">DATA</text>
<text class="u" x="186" y="732" style="font-size:14.500px;fill:#333" textLength="85" lengthAdjust="spacingAndGlyphs">DASHBOARD</text>
<text class="u" x="296" y="734" style="font-size:14.500px;fill:#222" textLength="58" lengthAdjust="spacingAndGlyphs">PIVOT_01</text>
<path d="M174 721v14M283.500 721v14M367.500 721v14" stroke="#cfc9cd"/>
<path d="M410 728h11M415.500 722.500v11" stroke="#444"/>
<path d="M822 725v1M822 729v1M822 733v1" stroke="#333" stroke-width="2"/>
<rect x="838" y="720" width="509" height="17" rx="8" fill="#f5f5f5"/>
<rect x="855" y="724" width="428" height="9" rx="4" fill="#737373"/>
<path d="M849 724l-6 4.500 6 4.500zM1336 724l6 4.500-6 4.500z" fill="#5f5f5f"/>

<!-- status bar -->
<rect y="745" width="1366" height="1" fill="#c9c5c8"/>
<rect y="746" width="1366" height="22" fill="#f3f3f3"/>
<text class="u" x="11" y="761" style="font-size:12.500px" textLength="23" lengthAdjust="spacingAndGlyphs">Listo</text>
<g fill="none" stroke="#444"><rect x="55.500" y="750.500" width="12" height="12"/><path d="M55.500 753.500h12M58 756h6M58 759h3"/><circle cx="65" cy="760" r="3" fill="#f3f3f3"/></g>
<g fill="none" stroke="#444"><circle cx="93" cy="751" r="2"/><path d="M88 754h10M93 754v4l-3 5M93 758l2 3M97 760l2 3 3-5"/></g>
<text class="u" x="105" y="761" style="font-size:12.500px" textLength="143" lengthAdjust="spacingAndGlyphs">Accesibilidad: todo correcto</text>
<rect x="1072" y="746" width="40" height="22" fill="#dfdfdf"/>
<path d="M1085.500 750.500h12v12h-12zM1085.500 754.500h12M1085.500 758.500h12M1089.500 750.500v12M1093.500 750.500v12M1125.500 750.500h13v13h-13zM1128 753.500h8v7h-8zM1128 756h8M1128 758h8M1165.500 750.500h13v12h-13zM1171.500 750.500v7h-6" fill="none" stroke="#444"/>
<path d="M1198 757h8M1211 757h100M1316 757h8M1320 753v8M1261.500 754v6" stroke="#555"/>
<rect x="1246" y="751" width="5" height="12" fill="#5f5f5f"/>
<text class="u" x="1337" y="761" style="font-size:12.500px" textLength="21" lengthAdjust="spacingAndGlyphs">75%</text>
</svg>
</body></html>
